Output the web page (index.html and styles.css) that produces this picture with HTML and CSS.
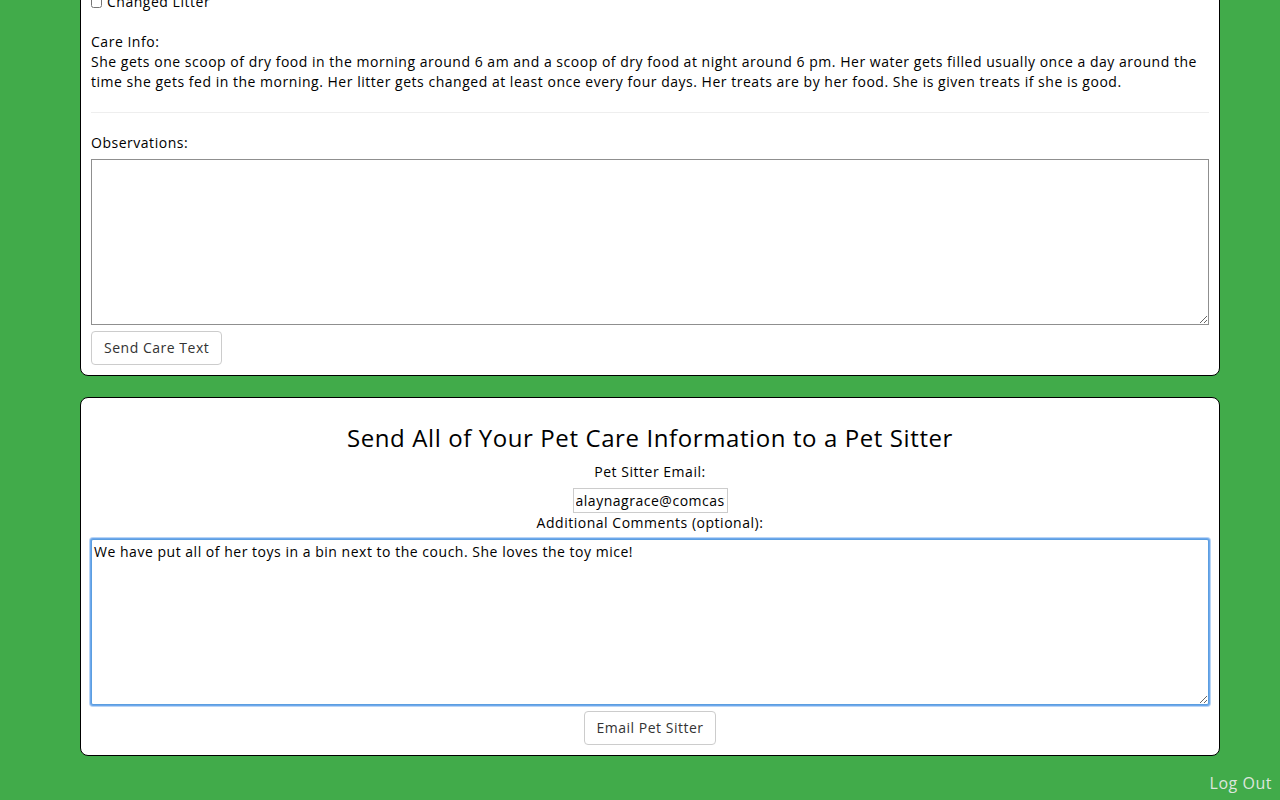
FILE: index.html
```html
<!DOCTYPE html>
<html>
<head>
<meta charset="utf-8">
<link rel="stylesheet" href="styles.css">
</head>
<body>
<div class="container">
  <div class="card card-care">
    <div class="check-row">
      <input type="checkbox" class="check"><span class="check-label">Changed Litter</span>
    </div>
    <div class="care-info">
      <div>Care Info:</div>
      <div>She gets one scoop of dry food in the morning around 6 am and a scoop of dry food at night around 6 pm. Her water gets filled usually once a day around the time she gets fed in the morning. Her litter gets changed at least once every four days. Her treats are by her food. She is given treats if she is good.</div>
    </div>
    <hr class="divider">
    <label class="field-label">Observations:</label>
    <textarea class="area"></textarea>
    <div class="btn-row">
      <button class="btn">Send Care Text</button>
    </div>
  </div>

  <div class="card card-sitter">
    <h3 class="title">Send All of Your Pet Care Information to a Pet Sitter</h3>
    <label class="field-label center">Pet Sitter Email:</label>
    <div class="center-row"><input class="email" type="text" value="alaynagrace@comcast.net"></div>
    <div class="center-text">Additional Comments (optional):</div>
    <textarea class="area focused">We have put all of her toys in a bin next to the couch. She loves the toy mice!</textarea>
    <div class="btn-row centered">
      <button class="btn btn-email">Email Pet Sitter</button>
    </div>
  </div>
</div>
<div class="logout-row"><a class="logout">Log Out</a></div>
</body>
</html>
```

FILE: styles.css
```css
* { box-sizing: border-box; }
html, body {
  margin: 0;
  padding: 0;
  background: #41ab4a;
  font-family: "Open Sans", "Liberation Sans", sans-serif;
  font-size: 14px;
  line-height: 20px;
  letter-spacing: 0.52px;
  color: #000;
  overflow: hidden;
}
.container {
  width: 1140px;
  margin: 0 0 0 80px;
}
.card {
  background: #fff;
  border: 1px solid #000;
  border-radius: 8px;
  padding: 0 10px 10px;
}
.card-care {
  margin-top: -9px;
  border-top-left-radius: 0;
  border-top-right-radius: 0;
}
.check-row {
  display: flex;
  align-items: center;
  height: 20px;
}
.check {
  margin: 0 5px 0 0;
  width: 11px;
  height: 11px;
}
.care-info {
  margin-top: 20px;
}
.divider {
  border: 0;
  border-top: 1px solid #eee;
  margin: 20px 0;
}
.field-label {
  display: block;
  margin-bottom: 6px;
}
.field-label.center { text-align: center; }
.area {
  display: block;
  width: 100%;
  height: 166px;
  border: 1px solid #8f8f8f;
  border-radius: 0;
  font-family: inherit;
  font-size: 14px;
  line-height: 20px;
  letter-spacing: 0.52px;
  padding: 2px 2px;
  margin: 0;
  resize: vertical;
  color: #000;
}
.area.focused {
  outline: none;
  border-color: #5b9ee0;
  border-radius: 2px;
  box-shadow: 0 0 0 1px #6ea8ec, 0 0 0 2px #b8d5f6;
}
.btn-row {
  display: flex;
  margin-top: 6px;
}
.btn-row.centered { justify-content: center; }
.btn {
  font-family: inherit;
  font-size: 14px;
  line-height: 20px;
  letter-spacing: 0.52px;
  padding: 6px 12px;
  background: #fff;
  color: #333;
  border: 1px solid #ccc;
  border-radius: 4px;
  height: 34px;
}
.btn-email {
  padding: 6px 11px;
}
.card-sitter {
  margin-top: 21px;
}
.title {
  font-size: 24px;
  font-weight: 400;
  line-height: 26px;
  letter-spacing: 0.6px;
  text-align: center;
  margin: 27px 0 11px;
}
.center-row {
  display: flex;
  justify-content: center;
}
.email {
  width: 155px;
  height: 25px;
  border: 1px solid #ccc;
  font-family: inherit;
  font-size: 14px;
  letter-spacing: 0.52px;
  padding: 1px 2px;
  margin: 0;
  color: #000;
}
.center-text {
  text-align: center;
  margin-bottom: 6px;
}
.logout-row {
  display: flex;
  justify-content: flex-end;
  margin-top: 16px;
  padding-right: 8px;
}
.logout {
  color: #dde6dd;
  font-size: 16px;
  line-height: 22px;
}
```
